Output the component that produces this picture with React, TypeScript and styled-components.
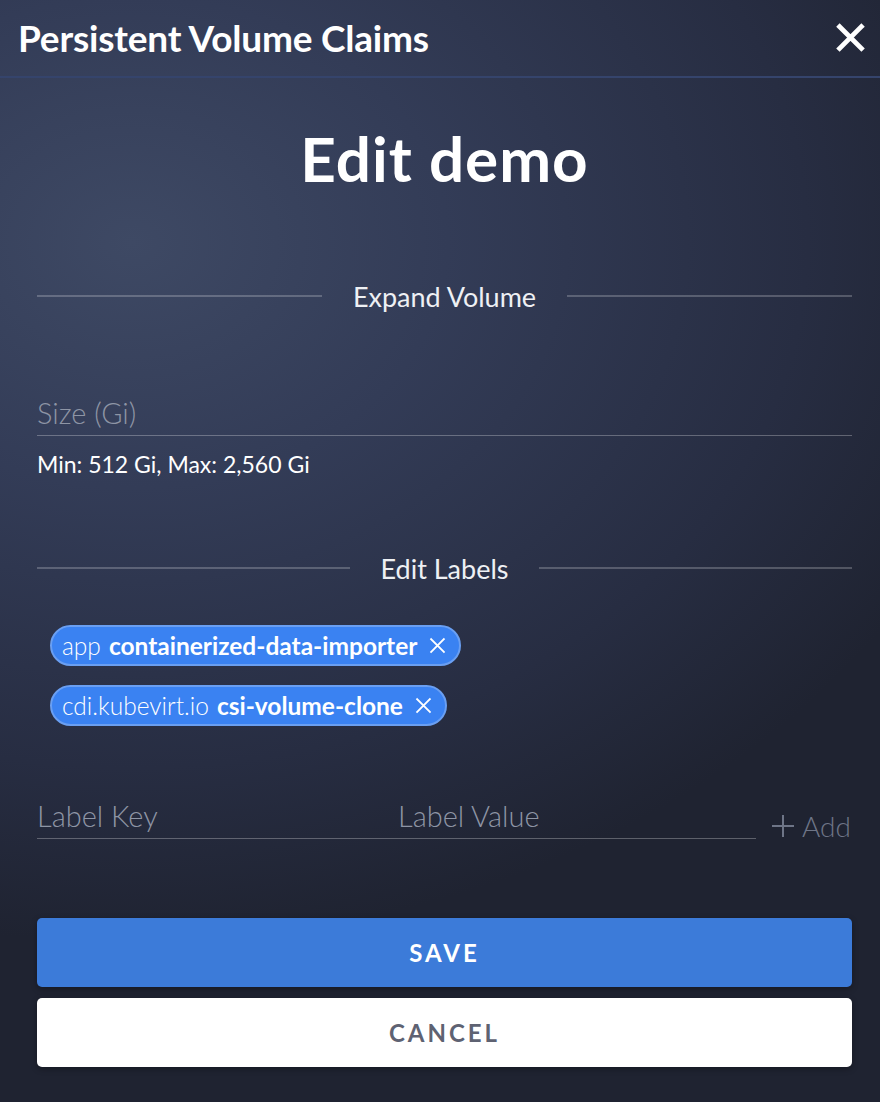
import React from "react";
import styled, { createGlobalStyle } from "styled-components";

const Global = createGlobalStyle`
  html, body { margin: 0; padding: 0; }
  body {
    font-family: Lato, "Open Sans", sans-serif;
    background: #232839;
  }
  * { box-sizing: border-box; }
`;

const Page = styled.div`
  width: 880px;
  height: 1102px;
  overflow: hidden;
  color: #fff;
  background: radial-gradient(ellipse 900px 700px at 15% 22%, #3e4964 0%, #333c57 35%, #272d42 75%, #1f2331 100%);
`;

const Header = styled.header`
  height: 78px;
  display: flex;
  align-items: center;
  justify-content: space-between;
  padding: 0 12px 2px 18px;
  border-bottom: 2px solid #35446c;
`;

const HeaderTitle = styled.h1`
  margin: 0;
  font-family: Lato, sans-serif;
  font-weight: 700;
  font-size: 37px;
  letter-spacing: -0.2px;
  color: #fff;
`;

const CloseButton = styled.button`
  background: none;
  border: none;
  padding: 0;
  width: 36px;
  height: 36px;
  display: flex;
  align-items: center;
  justify-content: center;
  cursor: pointer;
`;

const Main = styled.main`
  padding: 0 28px 0 37px;
  display: flex;
  flex-direction: column;
`;

const Title = styled.h2`
  margin: 45px 0 0;
  text-align: center;
  font-family: Lato, sans-serif;
  font-weight: 700;
  font-size: 62px;
  line-height: 70px;
  letter-spacing: 1px;
`;

const Divider = styled.div<{ $mt: number }>`
  margin-top: ${(p) => p.$mt}px;
  display: flex;
  align-items: center;
  height: 32px;
`;

const DividerLine = styled.div`
  flex: 1;
  height: 2px;
  background: rgba(255, 255, 255, 0.22);
`;

const DividerText = styled.span`
  margin: 0 31px;
  font-size: 27px;
  font-weight: 400;
  color: #eef0f4;
`;

const Field = styled.div<{ $mt?: number; $w?: string }>`
  margin-top: ${(p) => p.$mt ?? 0}px;
  height: 41px;
  width: ${(p) => p.$w ?? "100%"};
  border-bottom: 1px solid rgba(255, 255, 255, 0.28);
  display: flex;
  align-items: center;
`;

const Input = styled.input`
  width: 100%;
  background: transparent;
  border: none;
  outline: none;
  font-family: Lato, sans-serif;
  font-weight: 300;
  font-size: 29px;
  color: #fff;
  padding: 0;
  margin-top: -5px;
  &::placeholder {
    color: #8e95a5;
    opacity: 1;
  }
`;

const Helper = styled.div`
  margin-top: 14px;
  font-size: 23px;
  line-height: 28px;
  color: #fff;
`;

const Chips = styled.div`
  margin-top: 41px;
  padding-left: 13px;
  display: flex;
  flex-direction: column;
  align-items: flex-start;
  gap: 19px;
`;

const Chip = styled.div`
  height: 41px;
  display: flex;
  align-items: center;
  gap: 8px;
  padding: 0 13px 0 10px;
  border-radius: 21px;
  background: #3a82f2;
  border: 2px solid #6a9ff2;
  font-size: 24.5px;
  color: #fff;
`;

const ChipKey = styled.span`
  font-weight: 300;
`;

const ChipValue = styled.span`
  font-weight: 700;
`;

const ChipClose = styled.span`
  display: flex;
  margin-left: 4px;
`;

const LabelRow = styled.div`
  margin-top: 72px;
  display: flex;
  align-items: flex-end;
`;

const AddButton = styled.button`
  margin-left: 15px;
  margin-bottom: -4px;
  background: none;
  border: none;
  padding: 0;
  display: flex;
  align-items: center;
  gap: 7px;
  font-family: Lato, sans-serif;
  font-weight: 300;
  font-size: 28px;
  color: #6e7587;
`;

const Actions = styled.div`
  margin-top: 79px;
  display: flex;
  flex-direction: column;
  gap: 11px;
`;

const ActionButton = styled.button<{ $primary?: boolean }>`
  height: 69px;
  width: 100%;
  border: none;
  border-radius: 5px;
  background: ${(p) => (p.$primary ? "#3c7bd9" : "#ffffff")};
  color: ${(p) => (p.$primary ? "#ffffff" : "#5e6272")};
  font-family: Lato, sans-serif;
  font-weight: 700;
  font-size: 24px;
  letter-spacing: 3px;
  box-shadow: 0 2px 6px rgba(0, 0, 0, 0.3);
  cursor: pointer;
`;

const XIcon = ({ size, stroke }: { size: number; stroke: number }) => (
  <svg width={size} height={size} viewBox="0 0 24 24" fill="none">
    <path d="M3 3L21 21M21 3L3 21" stroke="#fff" strokeWidth={stroke} strokeLinecap="square" />
  </svg>
);

const labels = [
  { key: "app", value: "containerized-data-importer" },
  { key: "cdi.kubevirt.io", value: "csi-volume-clone" },
];

export default function App() {
  return (
    <Page>
      <Global />
      <Header>
        <HeaderTitle>Persistent Volume Claims</HeaderTitle>
        <CloseButton aria-label="Close">
          <XIcon size={29} stroke={4} />
        </CloseButton>
      </Header>
      <Main>
        <Title>Edit demo</Title>
        <Divider $mt={87}>
          <DividerLine />
          <DividerText>Expand Volume</DividerText>
          <DividerLine />
        </Divider>
        <Field $mt={83}>
          <Input placeholder="Size (Gi)" />
        </Field>
        <Helper>Min: 512 Gi, Max: 2,560 Gi</Helper>
        <Divider $mt={74}>
          <DividerLine />
          <DividerText>Edit Labels</DividerText>
          <DividerLine />
        </Divider>
        <Chips>
          {labels.map((l) => (
            <Chip key={l.key}>
              <ChipKey>{l.key}</ChipKey>
              <ChipValue>{l.value}</ChipValue>
              <ChipClose>
                <XIcon size={17} stroke={2.6} />
              </ChipClose>
            </Chip>
          ))}
        </Chips>
        <LabelRow>
          <Field $w="361px">
            <Input placeholder="Label Key" />
          </Field>
          <Field $w="358px">
            <Input placeholder="Label Value" />
          </Field>
          <AddButton>
            <svg width="24" height="24" viewBox="0 0 24 24">
              <path d="M12 1V23M1 12H23" stroke="#6e7587" strokeWidth="2" />
            </svg>
            Add
          </AddButton>
        </LabelRow>
        <Actions>
          <ActionButton $primary>SAVE</ActionButton>
          <ActionButton>CANCEL</ActionButton>
        </Actions>
      </Main>
    </Page>
  );
}
